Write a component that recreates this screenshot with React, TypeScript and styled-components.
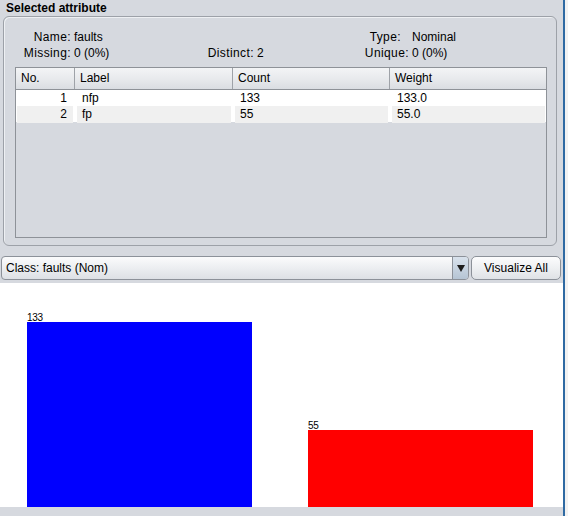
import styled, { createGlobalStyle } from 'styled-components';

interface LabelRow {
  no: number;
  label: string;
  count: number;
  weight: string;
}

const rows: LabelRow[] = [
  { no: 1, label: 'nfp', count: 133, weight: '133.0' },
  { no: 2, label: 'fp', count: 55, weight: '55.0' }
];

const barColors = ['#0000ff', '#ff0000'];
const MAX_BAR = 185;

const GlobalStyle = createGlobalStyle`
  html, body {
    margin: 0;
    padding: 0;
    background: #f2f2f2;
  }
  body {
    font-family: "Liberation Sans", Arial, sans-serif;
    font-size: 12px;
    color: #000;
  }
`;

const Window = styled.div`
  display: flex;
  width: 568px;
  height: 516px;
  overflow: hidden;
`;

const Panel = styled.div`
  width: 563px;
  height: 516px;
  background: #d6d9df;
  display: flex;
  flex-direction: column;
`;

const EdgeLine = styled.div`
  width: 2px;
  background: #2f6aa3;
`;

const Title = styled.div`
  height: 16px;
  line-height: 16px;
  padding-left: 6px;
  font-weight: bold;
`;

const GroupBox = styled.div`
  margin-left: 3px;
  width: 554px;
  height: 230px;
  border: 1px solid #9da1a8;
  border-radius: 6px;
  box-shadow: inset 1px 1px 0 #eef0f3;
  padding-top: 12px;
  box-sizing: border-box;
  display: flex;
  flex-direction: column;
`;

const InfoGrid = styled.div`
  display: grid;
  grid-template-columns: 67px 97px 80px 97px 52px auto;
  column-gap: 3px;
  grid-auto-rows: 16px;
  line-height: 16px;
`;

const InfoLabel = styled.span<{ $pad?: number }>`
  text-align: right;
  padding-right: ${p => p.$pad ?? 0}px;
  white-space: nowrap;
  letter-spacing: 0.4px;
`;

const InfoValue = styled.span`
  white-space: nowrap;
`;

const Table = styled.div`
  margin: 6px 0 0 11px;
  width: 532px;
  height: 171px;
  border: 1px solid #8e9298;
  box-sizing: border-box;
  display: flex;
  flex-direction: column;
`;

const HeaderRow = styled.div`
  display: grid;
  grid-template-columns: 58px 158px 157px 157px;
  height: 22px;
  border-bottom: 1px solid #8e9298;
  box-sizing: border-box;
  background: linear-gradient(#f3f4f6, #e7e9ec 55%, #dadde2);
`;

const HeaderCell = styled.div`
  line-height: 21px;
  padding-left: 5px;
  border-left: 1px solid #9ea2a8;
  &:first-child {
    border-left: none;
  }
`;

const BodyRow = styled.div<{ $alt: boolean }>`
  display: grid;
  grid-template-columns: 58px 158px 157px 157px;
  height: 16px;
  background: #fff;
  & > div {
    background: ${p => (p.$alt ? '#f0f0f0' : '#fff')};
  }
`;

const Cell = styled.div<{ $right?: boolean }>`
  margin: 0 1px 0 3px;
  line-height: 17px;
  padding: ${p => (p.$right ? '0 6px 0 0' : '0 0 0 5px')};
  text-align: ${p => (p.$right ? 'right' : 'left')};
  &:first-child {
    margin-left: 1px;
  }
`;

const ControlRow = styled.div`
  display: flex;
  gap: 2px;
  margin-top: 10px;
  padding-left: 1px;
  height: 24px;
`;

const Combo = styled.div`
  width: 468px;
  display: flex;
  border: 1px solid #8c9199;
  border-radius: 4px;
  box-sizing: border-box;
  overflow: hidden;
  background: linear-gradient(#fbfbfc, #eceef1 50%, #dde0e5);
`;

const ComboText = styled.div`
  flex: 1;
  line-height: 22px;
  padding-left: 4px;
`;

const ComboArrow = styled.div`
  width: 15px;
  border-left: 1px solid #8c9199;
  background: linear-gradient(#d9e2ec, #b5c4d4);
  display: flex;
  align-items: center;
  justify-content: center;
`;

const Triangle = styled.div`
  width: 0;
  height: 0;
  border-left: 4px solid transparent;
  border-right: 4px solid transparent;
  border-top: 7px solid #1c1c1c;
`;

const Button = styled.div`
  width: 90px;
  border: 1px solid #8c9199;
  border-radius: 5px;
  box-sizing: border-box;
  background: linear-gradient(#fcfcfd, #eef0f2 50%, #dfe2e6);
  line-height: 22px;
  text-align: center;
`;

const Chart = styled.div`
  margin-top: 3px;
  height: 224px;
  background: #fff;
  display: flex;
  align-items: flex-end;
  gap: 56px;
  padding-left: 27px;
`;

const BarColumn = styled.div`
  width: 225px;
  display: flex;
  flex-direction: column;
`;

const BarLabel = styled.div`
  font-size: 10px;
  line-height: 8px;
  height: 8px;
  letter-spacing: -0.3px;
`;

const Bar = styled.div<{ $color: string }>`
  background: ${p => p.$color};
`;

const BottomStrip = styled.div`
  flex: 1;
`;

export default function App() {
  const max = Math.max(...rows.map(r => r.count));

  return (
    <>
      <GlobalStyle />
      <Window>
        <Panel>
          <Title>Selected attribute</Title>
          <GroupBox>
            <InfoGrid>
              <InfoLabel>Name:</InfoLabel>
              <InfoValue>faults</InfoValue>
              <span />
              <span />
              <InfoLabel $pad={8}>Type:</InfoLabel>
              <InfoValue>Nominal</InfoValue>

              <InfoLabel>Missing:</InfoLabel>
              <InfoValue>0 (0%)</InfoValue>
              <InfoLabel>Distinct:</InfoLabel>
              <InfoValue>2</InfoValue>
              <InfoLabel>Unique:</InfoLabel>
              <InfoValue>0 (0%)</InfoValue>
            </InfoGrid>

            <Table>
              <HeaderRow>
                <HeaderCell>No.</HeaderCell>
                <HeaderCell>Label</HeaderCell>
                <HeaderCell>Count</HeaderCell>
                <HeaderCell>Weight</HeaderCell>
              </HeaderRow>
              {rows.map((r, i) => (
                <BodyRow key={r.no} $alt={i % 2 === 1}>
                  <Cell $right>{r.no}</Cell>
                  <Cell>{r.label}</Cell>
                  <Cell>{r.count}</Cell>
                  <Cell>{r.weight}</Cell>
                </BodyRow>
              ))}
            </Table>
          </GroupBox>

          <ControlRow>
            <Combo>
              <ComboText>Class: faults (Nom)</ComboText>
              <ComboArrow>
                <Triangle />
              </ComboArrow>
            </Combo>
            <Button>Visualize All</Button>
          </ControlRow>

          <Chart>
            {rows.map((r, i) => (
              <BarColumn key={r.no}>
                <BarLabel>{r.count}</BarLabel>
                <Bar
                  $color={barColors[i]}
                  style={{ height: Math.round((r.count / max) * MAX_BAR) }}
                />
              </BarColumn>
            ))}
          </Chart>
          <BottomStrip />
        </Panel>
        <EdgeLine />
      </Window>
    </>
  );
}
